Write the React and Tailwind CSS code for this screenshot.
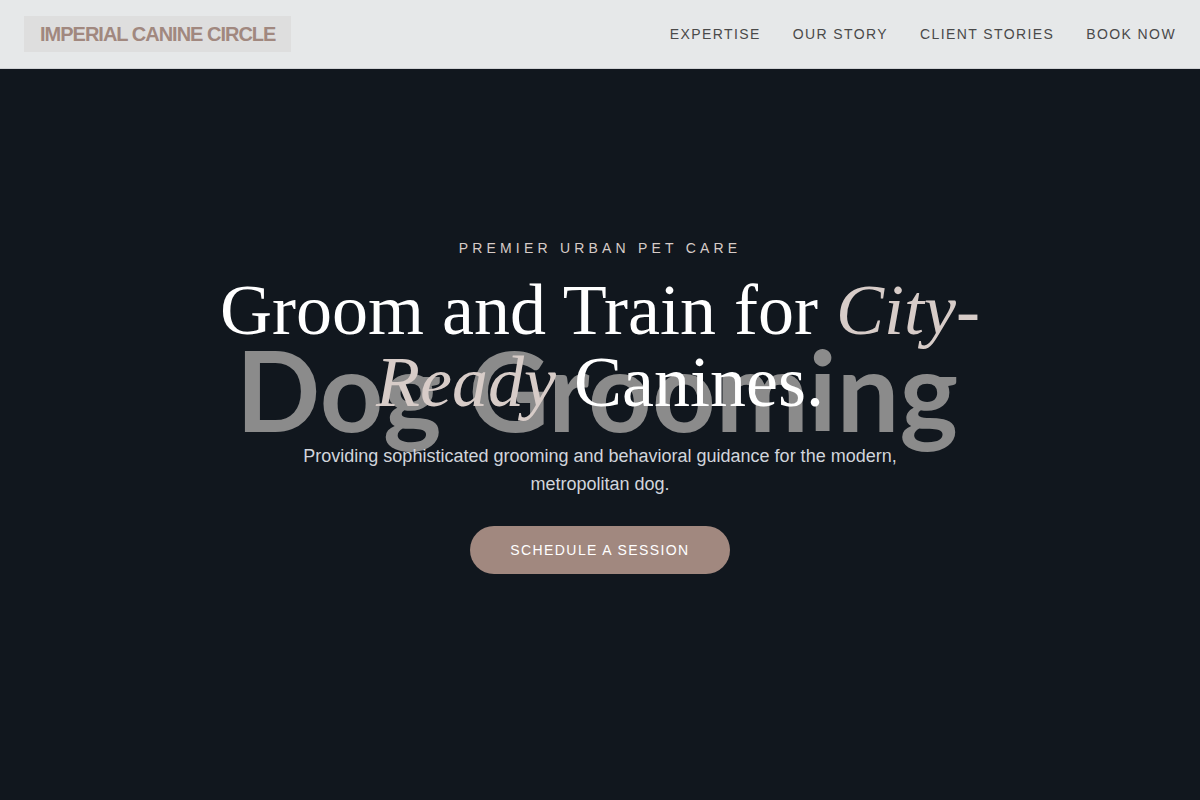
import React from 'react';

const links = [
  { label: "Expertise", href: "#expertise" },
  { label: "Our Story", href: "#story" },
  { label: "Client Stories", href: "#testimonials" },
  { label: "Book Now", href: "#book" }
];

function Header() {
  return (
    <header className="fixed inset-x-0 top-0 z-50 border-b border-[#cfd1d4] bg-[#e6e8e9]">
      <div className="flex items-center justify-between px-6 py-4">
        <a href="#home" className="bg-[#dedede] px-4 py-1 text-xl font-bold uppercase tracking-tighter text-[#a1887f]">
          Imperial Canine Circle
        </a>
        <nav className="flex gap-8 text-sm uppercase tracking-widest text-[#4a4a4a]">
          {links.map((link) => (
            <a key={link.href} href={link.href} className="hover:text-[#a1887f]">
              {link.label}
            </a>
          ))}
        </nav>
      </div>
    </header>
  );
}

function Hero() {
  return (
    <section id="home" className="relative flex min-h-screen items-center justify-center overflow-hidden bg-[#11171e]">
      {/* backdrop lettering */}
      <div
        aria-hidden="true"
        className="absolute inset-0 flex items-center justify-center pr-1.5 pb-5.5 whitespace-nowrap font-['Lato',sans-serif] text-[111px] leading-none font-bold text-[#8b8b8b]"
      >
        Dog Grooming
      </div>

      <div className="relative max-w-4xl px-6 text-center">
        <p className="mb-4 text-sm uppercase tracking-[0.3em] text-[#d7ccc8]">
          Premier Urban Pet Care
        </p>
        <h1 className="mb-6 font-['Liberation_Serif',serif] text-7xl leading-none text-white">
          Groom and Train for <em className="text-[#d7ccc8]">City-Ready</em> Canines.
        </h1>
        <p className="mx-auto mb-10 max-w-2xl text-lg leading-7 text-gray-300">
          Providing sophisticated grooming and behavioral guidance for the modern, metropolitan dog.
        </p>
        <a
          href="#book"
          className="rounded-full bg-[#a1887f] px-10 py-4 text-sm uppercase tracking-widest text-white hover:bg-[#8d6e63]"
        >
          Schedule a Session
        </a>
      </div>
    </section>
  );
}

export default function App() {
  return (
    <div className="font-['Liberation_Sans',Arial,sans-serif]">
      <Header />
      <main>
        <Hero />
      </main>
    </div>
  );
}
